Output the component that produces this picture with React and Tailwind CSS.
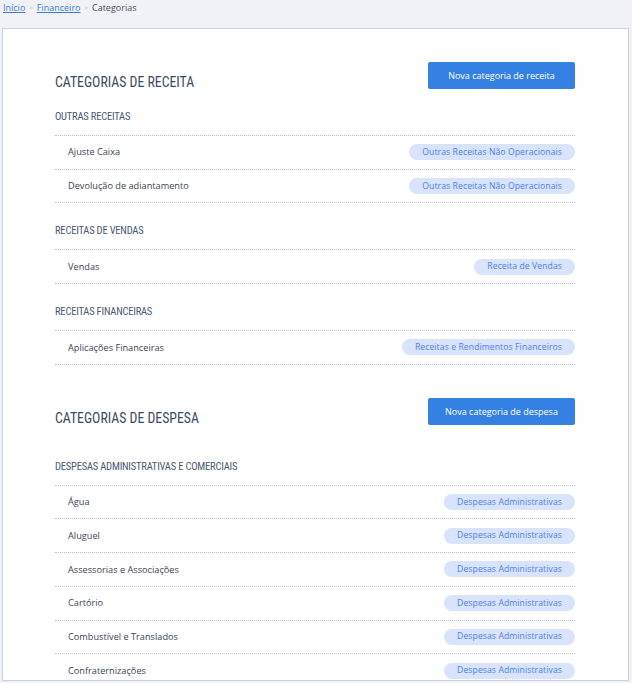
const sections = [
  {
    title: "CATEGORIAS DE RECEITA",
    button: "Nova categoria de receita",
    groups: [
      {
        name: "OUTRAS RECEITAS",
        items: [
          ["Ajuste Caixa", "Outras Receitas Não Operacionais"],
          ["Devolução de adiantamento", "Outras Receitas Não Operacionais"],
        ],
      },
      { name: "RECEITAS DE VENDAS", items: [["Vendas", "Receita de Vendas"]] },
      {
        name: "RECEITAS FINANCEIRAS",
        items: [["Aplicações Financeiras", "Receitas e Rendimentos Financeiros"]],
      },
    ],
  },
  {
    title: "CATEGORIAS DE DESPESA",
    button: "Nova categoria de despesa",
    groups: [
      {
        name: "DESPESAS ADMINISTRATIVAS E COMERCIAIS",
        items: [
          ["Água", "Despesas Administrativas"],
          ["Aluguel", "Despesas Administrativas"],
          ["Assessorias e Associações", "Despesas Administrativas"],
          ["Cartório", "Despesas Administrativas"],
          ["Combustível e Translados", "Despesas Administrativas"],
          ["Confraternizações", "Despesas Administrativas"],
        ],
      },
    ],
  },
];

const condensed = "font-['Roboto_Condensed','DejaVu_Sans_Condensed','Liberation_Sans_Narrow',Roboto,sans-serif]";

function Group({ group, first, isFirstSection }) {
  const pad = first ? (isFirstSection ? "pt-[18px]" : "pt-[32px]") : "pt-[21px]";
  return (
    <div>
      <div className={`${pad} pb-[11px] border-b border-dotted border-[#b9c0cc]`}>
        <h3 className={`${condensed} text-[10.5px] leading-[14px] text-[#4a5870] tracking-[-0.2px]`}>
          {group.name}
        </h3>
      </div>
      {group.items.map(([label, type]) => (
        <div
          key={label}
          className="h-[33.7px] flex items-center justify-between border-b border-dotted border-[#b9c0cc] pl-[13px]"
        >
          <span className="text-[9.2px] text-[#3a4456] font-['Open_Sans',sans-serif]">{label}</span>
          <span className="h-[16px] flex items-center rounded-full bg-[#d9e3fc] px-[13px] text-[8.6px] tracking-[0.1px] text-[#4b7ff0] font-['Open_Sans',sans-serif]">
            {type}
          </span>
        </div>
      ))}
    </div>
  );
}

function Section({ section, index }) {
  return (
    <section className={index === 0 ? "" : "pt-[33px]"}>
      <div className="flex items-start justify-between">
        <h2 className={`${condensed} mt-[10px] text-[13.8px] leading-[20px] text-[#3d4a62]`}>
          {section.title}
        </h2>
        <button className="w-[147px] h-[27px] rounded-[2px] bg-[#3580e3] text-white text-[9px] font-medium font-['Open_Sans',sans-serif]">
          {section.button}
        </button>
      </div>
      {section.groups.map((g, i) => (
        <Group key={g.name} group={g} first={i === 0} isFirstSection={index === 0} />
      ))}
    </section>
  );
}

export default function App() {
  return (
    <div className="w-[632px] h-[683px] bg-[#f0f2f7] overflow-hidden font-['Open_Sans',sans-serif]">
      <nav className="h-[28px] pl-[3px] pt-[1px] flex items-start gap-[4px] text-[9px] leading-[14px]">
        <a href="#" className="text-[#3b7ddd] underline">Início</a>
        <span className="text-[#c3c7cf] text-[7px] leading-[14px]">»</span>
        <a href="#" className="text-[#3b7ddd] underline">Financeiro</a>
        <span className="text-[#c3c7cf] text-[7px] leading-[14px]">»</span>
        <span className="text-[#4a4f5a]">Categorias</span>
      </nav>
      <main className="ml-[2px] w-[627px] h-[653px] bg-white border border-[#c9d1e0] overflow-hidden pl-[52px] pr-[53px] pt-[33px]">
        {sections.map((s, i) => (
          <Section key={s.title} section={s} index={i} />
        ))}
      </main>
    </div>
  );
}
